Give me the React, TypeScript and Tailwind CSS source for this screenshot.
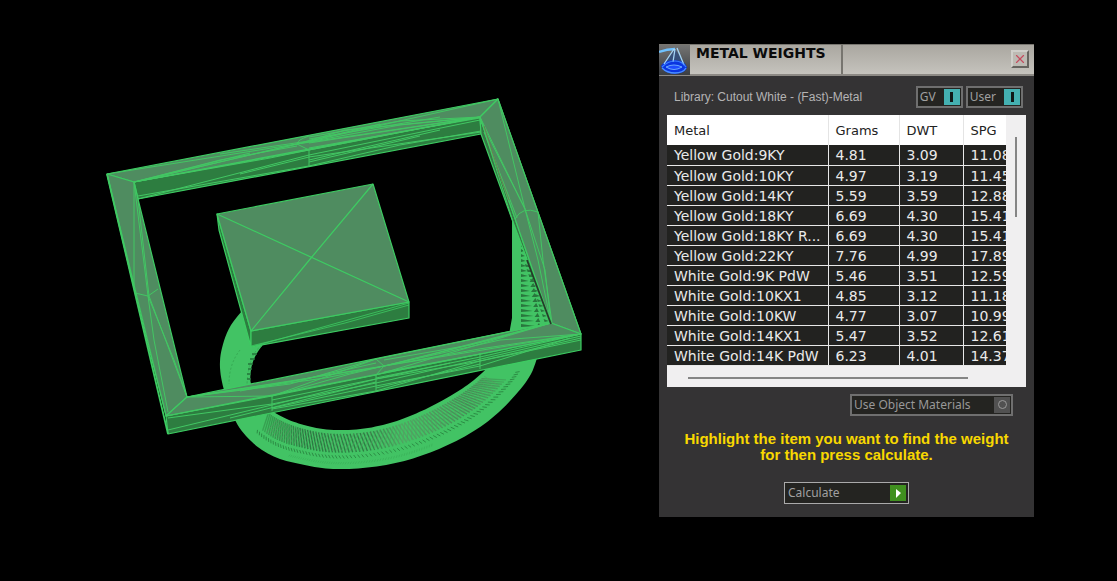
import React, { useState } from 'react';
import { X } from 'lucide-react';

interface MetalRow {
  metal: string;
  grams: string;
  dwt: string;
  spg: string;
}

const metals: MetalRow[] = [
  { metal: 'Yellow Gold:9KY', grams: '4.81', dwt: '3.09', spg: '11.08' },
  { metal: 'Yellow Gold:10KY', grams: '4.97', dwt: '3.19', spg: '11.45' },
  { metal: 'Yellow Gold:14KY', grams: '5.59', dwt: '3.59', spg: '12.88' },
  { metal: 'Yellow Gold:18KY', grams: '6.69', dwt: '4.30', spg: '15.41' },
  { metal: 'Yellow Gold:18KY R...', grams: '6.69', dwt: '4.30', spg: '15.41' },
  { metal: 'Yellow Gold:22KY', grams: '7.76', dwt: '4.99', spg: '17.89' },
  { metal: 'White Gold:9K PdW', grams: '5.46', dwt: '3.51', spg: '12.59' },
  { metal: 'White Gold:10KX1', grams: '4.85', dwt: '3.12', spg: '11.18' },
  { metal: 'White Gold:10KW', grams: '4.77', dwt: '3.07', spg: '10.99' },
  { metal: 'White Gold:14KX1', grams: '5.47', dwt: '3.52', spg: '12.61' },
  { metal: 'White Gold:14K PdW', grams: '6.23', dwt: '4.01', spg: '14.37' },
];

type Point = [number, number];

// Outer and inner rims of the ring shank, walked in the same direction
const outerRim: Point[] = [
  [250, 302], [231, 325], [222, 348], [220, 368], [224, 390], [234, 418], [246, 436], [262, 450],
  [280, 459], [300, 464], [322, 468], [345, 469], [372, 467], [400, 462], [426, 454], [452, 443],
  [477, 429], [499, 412], [518, 392], [531, 374], [538, 355],
];
const innerRim: Point[] = [
  [266, 341], [259, 350], [254, 359], [251, 370], [251, 384], [259, 399], [267, 407], [277, 414],
  [289, 420], [304, 425], [323, 429], [345, 430], [368, 428], [390, 423], [410, 416], [428, 408],
  [445, 399], [460, 390], [474, 380], [487, 368], [495, 356],
];

const mix = (a: Point, b: Point, t: number): Point => [a[0] + (b[0] - a[0]) * t, a[1] + (b[1] - a[1]) * t];

// Catmull-Rom position on a rim, t from 0 to 1
function along(rim: Point[], t: number): Point {
  const pos = Math.min(Math.max(t, 0), 0.9999) * (rim.length - 1);
  const i = Math.floor(pos);
  const u = pos - i;
  const p0 = rim[Math.max(i - 1, 0)];
  const p1 = rim[i];
  const p2 = rim[i + 1];
  const p3 = rim[Math.min(i + 2, rim.length - 1)];
  const axis = (k: 0 | 1) =>
    0.5 *
    (2 * p1[k] +
      (p2[k] - p0[k]) * u +
      (2 * p0[k] - 5 * p1[k] + 4 * p2[k] - p3[k]) * u * u +
      (3 * p1[k] - p0[k] - 3 * p2[k] + p3[k]) * u * u * u);
  return [axis(0), axis(1)];
}

function smooth(rim: Point[]): Point[] {
  return Array.from({ length: 121 }, (_, i) => along(rim, i / 120));
}

const points = (list: Point[]) => list.map((p) => `${p[0].toFixed(1)},${p[1].toFixed(1)}`).join(' ');

// Short facets between two depths of the shank (0 = outer rim, 1 = inner rim)
function facets(start: number, end: number, count: number, from: number, to: number, skew: number) {
  let d = '';
  for (let i = 0; i < count; i++) {
    const t = start + (i / count) * (end - start);
    const p = mix(along(outerRim, t), along(innerRim, t), from);
    const q = mix(along(outerRim, t + skew), along(innerRim, t + skew), to);
    d += `M${p[0].toFixed(1)} ${p[1].toFixed(1)}L${q[0].toFixed(1)} ${q[1].toFixed(1)}`;
  }
  return d;
}

// Dark triangles between the mesh lines of the shoulder
function shoulderFacets() {
  let d = '';
  for (let y = 244; y < 326; y += 5) {
    const reach = (y - 226) * 0.34;
    const mid = 521 + reach * 0.42;
    const right = 517 + reach;
    d += `M521 ${y}L${mid} ${y + 2}L521 ${y + 3}Z`;
    if (y > 262) {
      d += `M${mid + 1} ${y + 3}L${mid + 4} ${y - 1}L${mid + 6} ${y + 3}Z`;
      d += `M${right - 5} ${y}L${right} ${y + 2}L${right - 4} ${y + 3}Z`;
    }
  }
  return d;
}

function RingModel() {
  return (
    <svg viewBox="0 0 659 581" className="block h-auto w-full" role="img" aria-label="Wireframe ring model">
      {/* Shank */}
      <defs>
        <linearGradient id="facetShade" gradientUnits="userSpaceOnUse" x1="255" y1="0" x2="520" y2="0">
          <stop offset="0" stopColor="#3aa955" />
          <stop offset="0.2" stopColor="#287c40" />
          <stop offset="0.42" stopColor="#2c8043" />
          <stop offset="0.56" stopColor="#4caa61" />
          <stop offset="0.8" stopColor="#438f55" />
          <stop offset="1" stopColor="#3fb55c" />
        </linearGradient>
      </defs>
      <polygon points={points([...smooth(outerRim), ...smooth(innerRim).reverse()])} fill="#42c364" />
      <path d={facets(0.33, 0.93, 84, 0.42, 0.9, -0.012)} stroke="url(#facetShade)" strokeWidth="1.4" />
      <path d={facets(0.36, 0.93, 60, 0.9, 0.45, -0.018)} stroke="#5d9465" strokeWidth="0.6" />
      <path d={facets(0.32, 0.96, 84, 0.27, 0.35, -0.004)} stroke="#2c8c44" strokeWidth="1" />
      <path d={facets(0.42, 0.72, 60, 0.12, 0.18, 0.003)} stroke="#38ad56" strokeWidth="0.6" />
      <path d="M262 346Q249 352 247 384M240 350Q229 364 229 384" stroke="#36a853" strokeWidth="1" strokeDasharray="2 2" fill="none" />
      <path d="M252 354h5M250 359h5M248 364h5M248 369h4M247 374h4M247 379h4" stroke="#25763b" strokeWidth="1.6" />

      {/* Right shoulder */}
      <polygon points="512,220 514,220 553,326 540,340 508,340 512,318" fill="#42c364" />
      <path d={shoulderFacets()} fill="#28763c" />

      <g stroke="#3dcc62" strokeWidth="1.2" strokeLinejoin="round">
        {/* Frame walls */}
        <polygon points="134,182 480,117 481,134 138,199" fill="#2d7d40" />
        <polygon points="480,117 481,134 513,222 551,323" fill="#377746" />
        <polygon points="166,416 581,334 581,350 168,434" fill="#2d7d40" />
        {/* Frame top faces */}
        <polygon points="107,174 498,99 480,117 134,182" fill="#4f8c60" />
        <polygon points="107,174 134,182 138,199 187,397 166,416" fill="#4f8c60" />
        <polygon points="498,99 581,334 551,323 480,117" fill="#4f8c60" />
        <polygon points="166,416 187,397 551,323 581,334" fill="#4f8c60" />
        <path d="M107 174L168 434" strokeWidth="1.8" />
      </g>

      <g fill="none" stroke="#42c763" strokeWidth="1">
        <path d="M134 182L297 144L498 99M134 182L309 150L480 117M107 174L297 144L345 130L480 117M134 182L270 158L309 150M309 150L480 117L297 144L309 150V166M297 144Q297 140 309 136" />
        <path d="M138 199L309 155L480 120M138 196L309 166M240 174L309 157L481 132M309 162L420 136M309 143L480 117M309 148L480 118M160 176L297 144M134 182L250 153" />
        <path d="M134 182L220 160L297 146M297 144L400 125L480 117M309 137L400 121L480 117M309 139L440 117M220 154L309 141L380 124M309 166L400 145L481 131M309 160L440 130" />
        <path d="M107 174L135 293L166 416M134 182V286M135 293L148 296L158 289M134 182L148 296M138 199L149 296L187 397M148 296L154 340L168 412M148 296L174 360L187 397" />
        <path d="M480 117L525 209L498 99M480 117L513 222M480 120L525 209M498 99L538 212L581 334M515 219Q522 206 538 212M525 209L538 260L551 323M525 209L545 270L551 323M538 212L543 260L552 323M484 132L517 218" />
        <path d="M166 416L272 396L376 375L551 323M187 397L272 396L376 359L551 323M187 397L325 378L384 366L581 334M384 366L479 349L581 334M376 359L384 366L376 375V391M272 396V411M480 353V369" />
        <path d="M168 418L272 404L376 383L581 336M168 430L272 405L376 379L480 361L581 338M272 409L376 391L480 361L581 340M230 418L376 382M384 366L500 340L581 334M376 386L480 366L570 338M187 397L290 384L376 359M272 396L350 374L384 366L490 340L551 323M384 372L480 354M200 395L380 367" />
        <path d="M187 397L300 380L376 363M240 391L320 376L384 366M272 400L376 379L450 363M376 378L480 357L581 334M384 366L440 352L551 323M376 388L480 364M272 408L376 386M384 360L470 345L551 323" />
      </g>
      <path d="M527 260L551 324" stroke="#263b29" strokeWidth="1.8" />
      <path d="M484 126L500 176L509 200" stroke="#76684f" strokeWidth="0.8" fill="none" />

      {/* Centre stone plate */}
      <g stroke="#3dcc62" strokeWidth="1.2" strokeLinejoin="round">
        <polygon points="217,214 251,331 251,347 219,230" fill="#2d7d40" />
        <polygon points="251,331 409,302 409,318 251,347" fill="#2d7d40" />
        <polygon points="217,214 373,184 409,302 251,331" fill="#4f8c60" />
        <path d="M217 214L409 302M373 184L311 258L251 331" fill="none" />
        <path d="M251 347L409 303M251 346L345 323L409 305" fill="none" strokeWidth="0.8" />
      </g>
    </svg>
  );
}

function PanelIcon() {
  return (
    <svg viewBox="0 0 31 30" className="block h-[30px] w-[31px] shrink-0" aria-hidden="true">
      <defs>
        <linearGradient id="panelIconBack" x1="0" y1="0" x2="0" y2="1">
          <stop offset="0" stopColor="#747473" />
          <stop offset="1" stopColor="#3b3e42" />
        </linearGradient>
      </defs>
      <rect width="31" height="30" fill="url(#panelIconBack)" />
      <path d="M16 4L5 20H27Z" fill="#264a86" opacity="0.7" />
      <path d="M2 21Q5 15 15 15Q25 15 28 22Q27 28 16 29Q4 28 2 21Z" fill="#0a35e0" />
      <path d="M0 7Q8 4 16 4" stroke="#6fc2ff" strokeWidth="2.4" fill="none" />
      <path d="M15 4L5 19M16 4L14 17M18 3L25 20" stroke="#a5d4f5" strokeWidth="1.3" fill="none" />
      <path d="M3 22Q9 16 16 16Q23 16 27 22" stroke="#3f83ff" strokeWidth="1.2" fill="none" />
      <path d="M7 22Q15 18 23 22Q15 27 7 22Z" fill="#1e4dff" stroke="#69a8ff" strokeWidth="1" />
      <path d="M3 23Q8 28 16 28Q24 28 27 23" stroke="#4b90ff" strokeWidth="1.4" fill="none" />
    </svg>
  );
}

interface ToggleProps {
  label: string;
  pressed: boolean;
  onClick: () => void;
}

function Toggle({ label, pressed, onClick }: ToggleProps) {
  return (
    <button
      type="button"
      aria-pressed={pressed}
      onClick={onClick}
      className="flex h-[22px] items-center gap-2 border-2 border-[#6f6f6f] bg-[#242421] pr-px pl-[2px] font-['Noto_Sans'] text-xs text-[#a0a0a0]"
    >
      {label}
      <span className="flex h-4 w-4 items-center justify-center bg-[#44b0b1]">
        <span className={pressed ? 'h-[10px] w-[3px] bg-[#101818]' : 'h-[3px] w-[10px] bg-[#101818]'} />
      </span>
    </button>
  );
}

export default function App() {
  const [gv, setGv] = useState(true);
  const [user, setUser] = useState(true);
  const [objectMaterials, setObjectMaterials] = useState(false);

  return (
    <main className="flex min-h-screen items-start bg-black">
      <div className="min-w-0 flex-1">
        <RingModel />
      </div>

      <section className="mt-11 mr-[83px] w-[375px] shrink-0 bg-[#343334] pb-[13px]">
        {/* Title bar */}
        <header className="flex h-8 border-t border-b-2 border-t-[#77756f] border-b-[#8c8984] bg-linear-to-b from-[#aaa7a0] to-[#c5c3bd]">
          <PanelIcon />
          <h1 className="ml-[6px] w-[147px] border-r-2 border-[#77756f] font-['DejaVu_Sans'] text-sm leading-4 font-bold whitespace-nowrap text-[#0b0b0b]">
            METAL WEIGHTS
          </h1>
          <button
            type="button"
            aria-label="Close"
            className="mt-[5px] mr-[5px] ml-auto flex h-[18px] w-[18px] items-center justify-center border-2 border-t-[#d0cfca] border-r-[#66645f] border-b-[#66645f] border-l-[#d0cfca] bg-[#bdbab3]"
          >
            <X className="h-[14px] w-[14px] shrink-0 text-[#c64b5e]" strokeWidth={2} />
          </button>
        </header>

        {/* Library line */}
        <div className="flex items-start justify-between pt-[10px] pr-[11px] pl-[15px]">
          <p className="font-['Liberation_Sans'] text-xs leading-[22px] whitespace-nowrap text-[#b4b4b4]">
            Library: Cutout White - (Fast)-Metal
          </p>
          <div className="flex gap-[3px]">
            <Toggle label="GV" pressed={gv} onClick={() => setGv(!gv)} />
            <Toggle label="User" pressed={user} onClick={() => setUser(!user)} />
          </div>
        </div>

        {/* Metals list */}
        <div className="mx-2 mt-[7px] bg-[#f0eff0]">
          <div className="flex">
            <div className="min-w-0 flex-1 overflow-hidden">
              <table className="w-[380px] table-fixed border-collapse text-left font-['DejaVu_Sans'] text-sm leading-[18px] whitespace-nowrap">
                <colgroup>
                  <col className="w-[161px]" />
                  <col className="w-[71px]" />
                  <col className="w-16" />
                  <col />
                </colgroup>
                <thead className="bg-white text-[13px] text-[#222222]">
                  <tr className="h-[30px]">
                    <th className="border-r border-[#e4e4e4] p-0 pt-px pl-[7px] font-normal">Metal</th>
                    <th className="border-r border-[#e4e4e4] p-0 pt-px pl-[7px] font-normal">Grams</th>
                    <th className="border-r border-[#e4e4e4] p-0 pt-px pl-[7px] font-normal">DWT</th>
                    <th className="p-0 pt-px pl-[7px] font-normal">SPG</th>
                  </tr>
                </thead>
                <tbody className="bg-[#222220] text-[#eaeaea]">
                  {metals.map((row) => (
                    <tr key={row.metal} className="h-5 border-b border-[#e8e8e8]">
                      <td className="border-r border-[#e8e8e8] p-0 pt-px pl-[7px]">{row.metal}</td>
                      <td className="border-r border-[#e8e8e8] p-0 pt-px pl-[7px]">{row.grams}</td>
                      <td className="border-r border-[#e8e8e8] p-0 pt-px pl-[7px]">{row.dwt}</td>
                      <td className="p-0 pt-px pl-[7px]">{row.spg}</td>
                    </tr>
                  ))}
                </tbody>
              </table>
            </div>
            <div className="w-5 pt-[22px] pl-[9px]">
              <div className="h-20 w-[2px] bg-[#858585]" />
            </div>
          </div>
          <div className="h-[21px] pt-[11px] pl-[21px]">
            <div className="h-[2px] w-[280px] bg-[#858585]" />
          </div>
        </div>

        <div className="mt-[7px] mr-[21px] flex justify-end">
          <button
            type="button"
            aria-pressed={objectMaterials}
            onClick={() => setObjectMaterials(!objectMaterials)}
            className="flex h-[22px] w-[163px] items-center justify-between border-2 border-[#6f6f6f] bg-[#242421] pr-px pl-[2px] font-['Noto_Sans'] text-xs text-[#989898]"
          >
            Use Object Materials
            <span className="flex h-4 w-4 items-center justify-center bg-[#515151]">
              <span className="h-[9px] w-[9px] rounded-full border border-[#999999]" />
            </span>
          </button>
        </div>

        <p className="mt-[15px] text-center font-['Liberation_Sans'] text-[15px] leading-4 font-bold text-[#f8d800]">
          Highlight the item you want to find the weight
          <br />
          for then press calculate.
        </p>

        <div className="mt-[19px] flex justify-center">
          <button
            type="button"
            className="flex h-[22px] w-[125px] items-center justify-between border border-[#aaaaaa] bg-[#242421] pr-[2px] pl-[3px] font-['Noto_Sans'] text-xs text-[#a0a0a0]"
          >
            Calculate
            <svg viewBox="0 0 16 16" className="h-4 w-4" aria-hidden="true">
              <rect width="16" height="16" fill="#40901f" />
              <path d="M6 4L11 8L6 13Z" fill="#ffffff" />
            </svg>
          </button>
        </div>
      </section>
    </main>
  );
}
